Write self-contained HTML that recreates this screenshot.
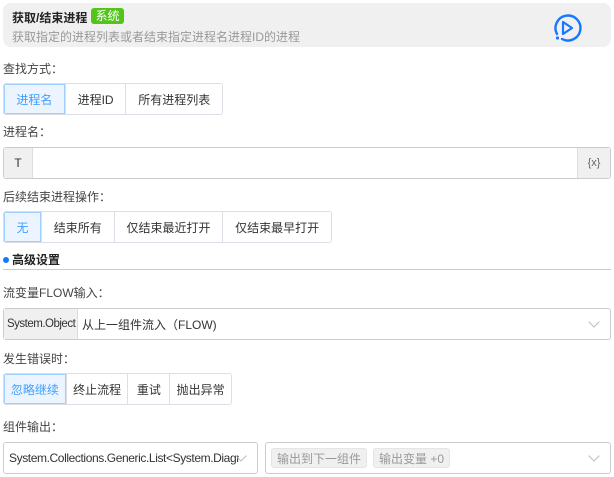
<!DOCTYPE html>
<html><head><meta charset="utf-8"><style>
*{box-sizing:border-box;margin:0;padding:0}
body{width:614px;height:477px;background:#fff;font-family:"Liberation Sans","Noto Sans CJK SC",sans-serif;font-size:12px;color:#333;position:relative;overflow:hidden}
.a{position:absolute}
.hdr{left:3px;top:3px;width:608px;height:44px;background:#f0f0f0;border-radius:8px}
.lbl{left:3px;font-size:12px;color:#444}
.grp{display:flex;border:1px solid #dcdfe6;border-radius:3px;height:32px;overflow:hidden}
.grp div{display:flex;align-items:center;justify-content:center;border-left:1px solid #dcdfe6;height:100%}
.grp div:first-child{border-left:none;background:#ecf5ff;color:#409eff;box-shadow:inset 0 0 0 1px #a0cfff}
.box{border:1px solid #ccc;border-radius:3px;height:32px;display:flex;align-items:center;background:#fff}
.chev{position:absolute;right:12px;top:9px;width:8px;height:8px;border-right:1px solid #bbb;border-bottom:1px solid #bbb;transform:rotate(45deg)}
.tag{background:#f0f0f0;border:1px solid #e5e5e5;border-radius:3px;color:#999;height:20px;display:flex;align-items:center;padding:0 5px;margin-right:6px}
</style></head><body>
<div class="a hdr"></div>
<div class="a" style="left:12px;top:9px;font-weight:bold;font-size:12px;color:#222">获取/结束进程</div>
<div class="a" style="left:91px;top:8px;width:33px;height:16px;background:#52c41a;border-radius:3px;color:#fff;font-size:12px;text-align:center;line-height:16px">系统</div>
<div class="a" style="left:12px;top:28px;color:#999;font-size:12px">获取指定的进程列表或者结束指定进程名进程ID的进程</div>
<svg class="a" style="left:550px;top:12px" width="34" height="32" viewBox="0 0 34 32"><path d="M7 22 A12.5 12.5 0 1 1 12 27" fill="none" stroke="#1677ff" stroke-width="2.4" stroke-linecap="round"/><circle cx="7.5" cy="26" r="1.6" fill="#1677ff"/><path d="M13 10 L22 16 L13 22 Z" fill="none" stroke="#1677ff" stroke-width="2.2" stroke-linejoin="round"/></svg>

<div class="a lbl" style="top:60px">查找方式：</div>
<div class="a grp" style="left:3px;top:83px;width:220px"><div style="width:61px">进程名</div><div style="width:61px">进程ID</div><div style="width:97px">所有进程列表</div></div>

<div class="a lbl" style="top:123px">进程名：</div>
<div class="a box" style="left:3px;top:147px;width:608px;border-color:#ccc">
<div style="width:29px;height:100%;background:#f0f0f0;border-right:1px solid #ddd;display:flex;align-items:center;justify-content:center">T</div>
<div style="flex:1"></div>
<div style="width:33px;height:100%;background:#f0f0f0;border-left:1px solid #ddd;display:flex;align-items:center;justify-content:center;color:#666;font-size:11px">{x}</div>
</div>

<div class="a lbl" style="top:188px">后续结束进程操作：</div>
<div class="a grp" style="left:3px;top:211px;width:329px"><div style="width:37px">无</div><div style="width:73px">结束所有</div><div style="width:109px">仅结束最近打开</div><div style="width:109px">仅结束最早打开</div></div>

<div class="a" style="left:3px;top:257px;width:6px;height:6px;border-radius:50%;background:#1677ff"></div>
<div class="a" style="left:12px;top:251px;font-weight:bold;color:#222">高级设置</div>
<div class="a" style="left:3px;top:269px;width:608px;height:1px;background:#ccc"></div>

<div class="a lbl" style="top:284px">流变量FLOW输入：</div>
<div class="a box" style="left:3px;top:308px;width:608px">
<div style="width:74px;height:100%;background:#f0f0f0;border-right:1px solid #ddd;display:flex;align-items:center;padding-left:3px;white-space:nowrap;font-size:11.5px;letter-spacing:-0.5px">System.Object</div>
<div style="padding-left:4px">从上一组件流入（FLOW)</div><div class="chev"></div></div>

<div class="a lbl" style="top:350px">发生错误时：</div>
<div class="a grp" style="left:3px;top:373px;width:229px"><div style="width:62px">忽略继续</div><div style="width:62px">终止流程</div><div style="width:42px">重试</div><div style="width:62px">抛出异常</div></div>

<div class="a lbl" style="top:418px">组件输出：</div>
<div class="a box" style="left:3px;top:442px;width:255px;padding-left:5px"><span style="display:block;width:230px;white-space:nowrap;overflow:hidden;letter-spacing:-0.4px">System.Collections.Generic.List&lt;System.Diagnostics.Process&gt;</span><div class="chev"></div></div>
<div class="a box" style="left:265px;top:442px;width:346px;padding-left:5px"><div class="tag">输出到下一组件</div><div class="tag">输出变量 +0</div><div class="chev"></div></div>
</body></html>
